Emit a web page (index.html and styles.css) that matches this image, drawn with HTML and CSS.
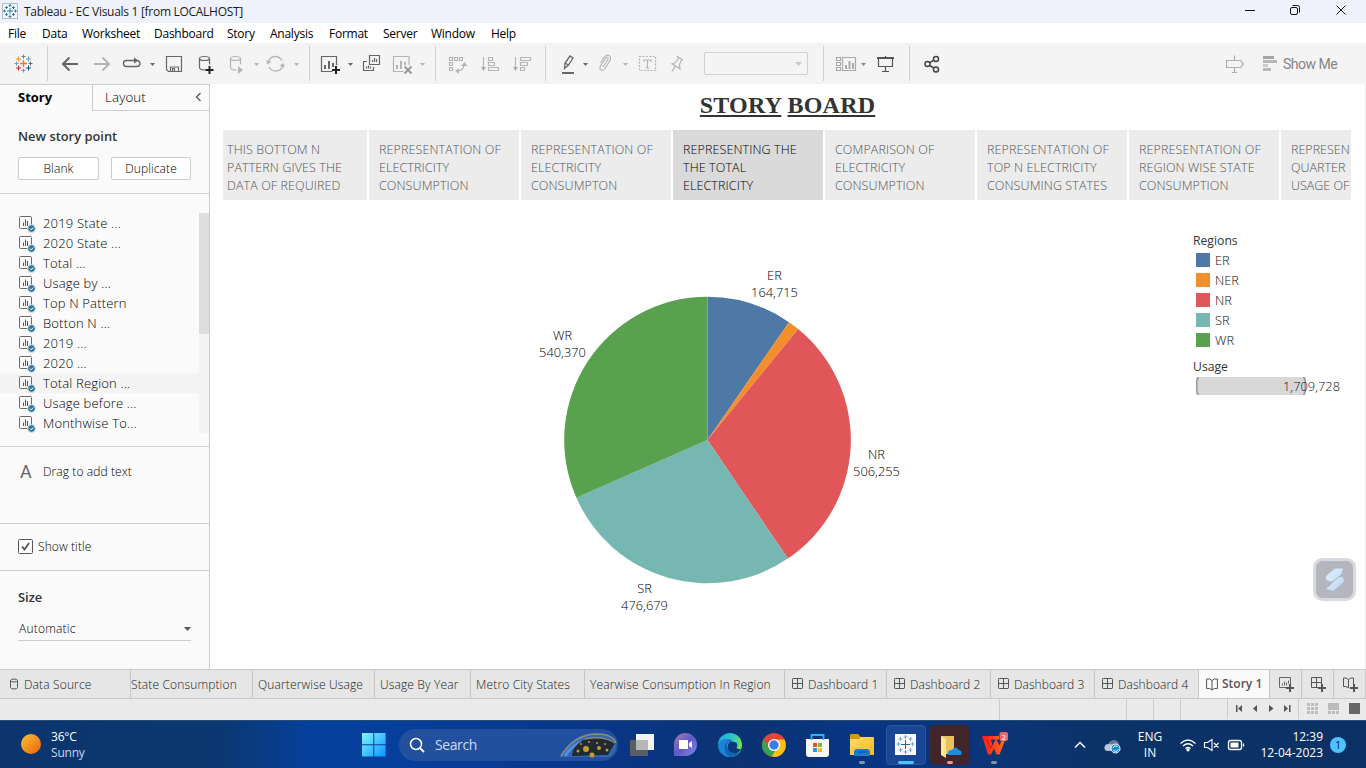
FILE: index.html
```html
<!DOCTYPE html>
<html lang="en">
<head>
<meta charset="utf-8">
<title>Tableau - EC Visuals 1</title>
<link rel="stylesheet" href="styles.css">
</head>
<body>
<svg width="0" height="0" class="defs">
  <defs>
    <linearGradient id="sun" x1="0" y1="0" x2="1" y2="1"><stop offset="0" stop-color="#f6c234"/><stop offset="1" stop-color="#f0600a"/></linearGradient>
    <linearGradient id="win" x1="0" y1="0" x2="1" y2="1"><stop offset="0" stop-color="#84f4ff"/><stop offset="1" stop-color="#0595ff"/></linearGradient>
    <linearGradient id="edge" x1="0" y1="0" x2="1" y2="0.4"><stop offset="0" stop-color="#1fa8e8"/><stop offset=".6" stop-color="#31c5c8"/><stop offset="1" stop-color="#6fe44e"/></linearGradient>
    <linearGradient id="folder" x1="0" y1="0" x2="1" y2="1"><stop offset="0" stop-color="#ffdc70"/><stop offset="1" stop-color="#fbba18"/></linearGradient>
    <linearGradient id="chat" x1="0" y1="0" x2="1" y2="1"><stop offset="0" stop-color="#b07ab0"/><stop offset=".5" stop-color="#5c58c9"/><stop offset="1" stop-color="#8c88f0"/></linearGradient>
    <linearGradient id="wing" x1="0" y1="0" x2="1" y2="1"><stop offset="0" stop-color="#e0effc"/><stop offset="1" stop-color="#b8daf8"/></linearGradient>
    <linearGradient id="wps" gradientUnits="userSpaceOnUse" x1="983" y1="0" x2="1004" y2="0"><stop offset="0" stop-color="#ff1c1c"/><stop offset="1" stop-color="#ff6a1c"/></linearGradient>
    <symbol id="sheet" viewBox="0 0 17 17">
      <rect x=".5" y=".5" width="12" height="12" rx="1" fill="none" stroke="#6a6a6a"/>
      <path d="M4.500 10V6.500M6.500 10V3.500M8.500 10V5" stroke="#555" fill="none"/>
      <circle cx="12.500" cy="12.500" r="3.900" fill="#337a9e" stroke="#fafafa" stroke-width=".8"/>
      <path d="M10.800 12.500l1.300 1.300 2.200-2.300" stroke="#fff" fill="none"/>
    </symbol>
    <symbol id="grid" viewBox="0 0 12 12"><rect x=".5" y=".5" width="10" height="10" rx=".7" fill="none" stroke="#555"/><path d="M5.500 .5v10M.5 5.500h10" stroke="#555"/></symbol>
    <symbol id="book" viewBox="0 0 12 13"><path d="M6 2.600L3.800 1H.6v9.500h3L6 12l2.400-1.500h3V1H8.200L6 2.600V12" fill="none" stroke="#555"/></symbol>
  </defs>
</svg>

<header class="titlebar">
  <svg class="app-icon" width="17" height="17" viewBox="0 0 17 17"><rect x=".5" y=".5" width="15" height="15" fill="#f2f6fb" stroke="#b5bcc4"/><path d="M8 5v6M5 8h6M8 1v3M6.600 2.500h2.800M8 12v3M6.600 13.500h2.800M1 8h3M2.500 6.600v2.800M12 8h3M13.500 6.600v2.800M4.500 3v3M3 4.500h3M11.500 3v3M10 4.500h3M4.500 10v3M3 11.500h3M11.500 10v3M10 11.500h3" stroke="#3381b0" stroke-width="1"/></svg>
  <span class="app-title">Tableau - EC Visuals 1 [from LOCALHOST]</span>
  <svg class="win-controls" width="136" height="23" viewBox="1230 0 136 23" fill="none" stroke="#111" stroke-width="1"><path d="M1245 10.500h10"/><rect x="1290.500" y="7.500" width="7" height="7" rx="1.500"/><path d="M1292.500 5.500h5q2 0 2 2v5"/><path d="M1336.500 5.500l9 9M1345.500 5.500l-9 9"/></svg>
</header>

<nav class="menu">
  <span class="m1">File</span><span class="m2">Data</span><span class="m3">Worksheet</span><span class="m4">Dashboard</span><span class="m5">Story</span><span class="m6">Analysis</span><span class="m7">Format</span><span class="m8">Server</span><span class="m9">Window</span><span>Help</span>
</nav>

<div class="toolbar">
  <svg width="47" height="41" viewBox="0 43 47 41" fill="none">
    <path d="M23.500 60v7M20 63.500h7" stroke="#e8762d" stroke-width="1.300"/>
    <path d="M18.500 56.500v5M16 59h5" stroke="#eb912b"/><path d="M28.500 56.500v5M26 59h5" stroke="#7099a6"/>
    <path d="M18.500 65.500v5M16 68h5" stroke="#c72037"/><path d="M28.500 65.500v5M26 68h5" stroke="#1f447e"/>
    <path d="M23.500 54.500v4M21.500 56.500h4" stroke="#59879b"/><path d="M23.500 68.500v4M21.500 70.500h4" stroke="#7099a6"/>
    <path d="M16.500 61.500v4M14.500 63.500h4" stroke="#7099a6"/><path d="M30.500 61.500v4M28.500 63.500h4" stroke="#5b6591"/>
  </svg>
  <i class="sep"></i>
  <svg width="261" height="41" viewBox="48 43 261 41" fill="none" stroke="#666">
    <path d="M78 64H63.500M69.500 57.500L63 64l6.500 6.500" stroke-width="2"/>
    <path d="M94 64h14.500M102.500 57.500L109 64l-6.500 6.500" stroke="#b5b5b5" stroke-width="2"/>
    <path d="M134 60.500h-7.500q-3 0-3 3t3 3h10.500q3 0 3-3q0-2-2-3" stroke-width="1.400"/><path d="M134 57.500v6l4.500-3z" fill="#666" stroke="none"/>
    <path d="M150 63h5l-2.500 3z" fill="#666" stroke="none"/>
    <path d="M166.500 56.500h15v15h-13l-2-2zM170.500 71.500v-4.500h8v4.500M172.500 71v-2.500h2v2.500" stroke-width="1.200"/>
    <g stroke-width="1.200"><ellipse cx="204.500" cy="58.500" rx="5" ry="2"/><path d="M199.500 58.500v9q0 2.500 6 2.500M209.500 58.500v6"/></g><path d="M209.500 66v8M205.500 70h8" stroke="#222" stroke-width="2"/>
    <g stroke="#b5b5b5" stroke-width="1.200"><ellipse cx="235.500" cy="58.500" rx="5" ry="2"/><path d="M230.500 58.500v9q0 2.500 6 2.500M240.500 58.500v6"/></g><path d="M238 66v8l5-4z" fill="#b5b5b5" stroke="none"/>
    <path d="M254 63h5l-2.500 3zM294 63h5l-2.500 3z" fill="#b5b5b5" stroke="none"/>
    <path d="M268.500 62q1.500-5.500 7-5.500q4 0 6.500 4M283 65.500q-1.500 5.500-7.500 5.500q-4 0-6.500-4" stroke="#b5b5b5" stroke-width="1.300"/><path d="M266.500 60l5 2-4.500 2.500zM284.500 67.500l-5-2 4.500-2.500z" fill="#b5b5b5" stroke="none"/>
  </svg>
  <i class="sep"></i>
  <svg width="125" height="41" viewBox="310 43 125 41" fill="none" stroke="#666">
    <path d="M336.500 65v-8.500h-15v15h11" stroke-width="1.200"/><path d="M325 69v-4M329 69v-8M333 67v-4" stroke-width="2"/><path d="M336 66v8M332 70h8" stroke="#222" stroke-width="2"/><path d="M348 63h5l-2.500 3z" fill="#666" stroke="none"/>
    <path d="M369.500 55.500h10v9h-10zM367 61.500h-3.500v9h10v-3.500M372.500 62v-2M374.500 62v-4M376.500 62v-3M366.500 68.500v-2M368.500 68.500v-3M370.500 68.500v-2" stroke-width="1.200"/>
    <g stroke="#b5b5b5"><path d="M409 65v-8.500h-15.500v15h10" stroke-width="1.200"/><path d="M397 69v-4M401 69v-8M405 65v-3" stroke-width="2"/><path d="M404.500 66.500l7 7M411.500 66.500l-7 7" stroke="#999" stroke-width="2"/></g><path d="M420 63h5l-2.500 3z" fill="#b5b5b5" stroke="none"/>
  </svg>
  <i class="sep"></i>
  <svg width="109" height="41" viewBox="436 43 109 41" fill="none" stroke="#b5b5b5" stroke-width="1.200">
    <path d="M449.500 57.500h3v3h-3zM454.500 57.500h3v3h-3zM459.500 57.500h3v3h-3zM449.500 62.500h3v3h-3zM449.500 67.500h3v3h-3zM464 64q0 7-7 7"/><path d="M461 66l3.500-4 3 4zM459 68v6l-4-3z" fill="#b5b5b5" stroke="none"/>
    <path d="M483.500 57v12M488.500 57.500h4v3h-4zM488.500 62.500h6v3h-6zM488.500 67.500h10v3h-10z"/><path d="M481 67h5l-2.500 4z" fill="#aaa" stroke="none"/>
    <path d="M515.500 57v12M520.500 57.500h10v3h-10zM520.500 62.500h7v3h-7zM520.500 67.500h4v3h-4z"/><path d="M513 67h5l-2.500 4z" fill="#aaa" stroke="none"/>
  </svg>
  <i class="sep"></i>
  <svg width="158" height="41" viewBox="546 43 158 41" fill="none" stroke="#666" stroke-width="1.200">
    <path d="M564.500 68.500l.5-5.500 5-7 3 2-4.500 7zM565 63l3.500 2" stroke-width="1.300"/><path d="M562 73h12" stroke-width="2"/><path d="M583 63h5l-2.500 3z" fill="#666" stroke="none"/>
    <g stroke="#b5b5b5"><path d="M603 67l4.500-7q1.200-2 0-2.500t-2.500 1.500l-4.500 7q-1.500 3 .5 4t4-1.500l5-8q1.500-4-1-5t-4.500 1.500l-4 6"/><path d="M623 63h5l-2.500 3z" fill="#b5b5b5" stroke="none"/><rect x="639.500" y="56.500" width="16" height="14" stroke-dasharray="2 1.300"/><path d="M644 62v-2h7v2M647.500 60v8M645.500 68h4"/><path d="M677.500 56.500l5 3.500-1.500.8-1.500 4 .5 4-8-5 3-1 3-3.500zM675 66.500l-3 5"/></g>
  </svg>
  <div class="combo"><svg width="7" height="4" viewBox="0 0 7 4"><path d="M0 0h7L3.500 4z" fill="#c8c8c8"/></svg></div>
  <i class="sep sep-gap"></i>
  <svg width="85" height="41" viewBox="824 43 85 41" fill="none" stroke="#aaa" stroke-width="1.200">
    <path d="M836.500 57.500h4v3h-4zM836.500 62.500h4v3h-4zM836.500 67.500h4v3h-4zM842.500 57.500h13v13h-13z"/><path d="M846 69v-4M849.500 69v-8M853 69v-6" stroke-width="2"/><path d="M861 63h5l-2.500 3z" fill="#888" stroke="none"/>
    <g stroke="#555"><path d="M877 58h17" stroke-width="2"/><path d="M878.500 58v8.500h14V58M885.500 56v2M885.500 67v4.500M882 71.500h7"/></g>
  </svg>
  <i class="sep"></i>
  <svg width="45" height="41" viewBox="910 43 45 41" fill="none" stroke="#444" stroke-width="1.500"><circle cx="927.500" cy="64" r="2.500"/><circle cx="936" cy="59" r="2.500"/><circle cx="936" cy="69.500" r="2.500"/><path d="M929.500 62.800l4.300-2.600M929.500 65.300l4.300 2.700"/></svg>
  <svg class="push" width="60" height="41" viewBox="1223 43 60 41" fill="none" stroke="#b0b0b0" stroke-width="1.200"><path d="M1226.500 60.500h14l3 3.500-3 3.500h-14zM1234.500 55.500v5M1234.500 67.500v5M1232 72.500h5"/><path d="M1263 57.500h11" stroke="#a5a5a5" stroke-width="3"/><path d="M1263 61.500h14M1263 69.500h8" stroke="#b8b8b8" stroke-width="3"/><path d="M1263 65.500h5" stroke="#ccc" stroke-width="3"/></svg>
  <span class="showme">Show Me</span>
</div>

<main class="work">
  <aside class="side">
    <div class="side-tabs"><b>Story</b><div class="layout-tab"><span>Layout</span><svg width="7" height="10" viewBox="0 0 7 10"><path d="M5.500 1L1.500 5l4 4" fill="none" stroke="#555" stroke-width="1.300"/></svg></div></div>
    <section class="new-point"><h3>New story point</h3><div class="buttons"><span>Blank</span><span>Duplicate</span></div></section>
    <section class="sheets">
      <ul>
        <li><svg><use href="#sheet"/></svg>2019 State ...</li>
        <li><svg><use href="#sheet"/></svg>2020 State ...</li>
        <li><svg><use href="#sheet"/></svg>Total ...</li>
        <li><svg><use href="#sheet"/></svg>Usage by ...</li>
        <li><svg><use href="#sheet"/></svg>Top N Pattern</li>
        <li><svg><use href="#sheet"/></svg>Botton N ...</li>
        <li><svg><use href="#sheet"/></svg>2019 ...</li>
        <li><svg><use href="#sheet"/></svg>2020 ...</li>
        <li class="hover"><svg><use href="#sheet"/></svg>Total Region ...</li>
        <li><svg><use href="#sheet"/></svg>Usage before ...</li>
        <li><svg><use href="#sheet"/></svg>Monthwise To...</li>
      </ul>
      <div class="scroll"><div class="thumb"></div></div>
    </section>
    <section class="drag"><span class="big-a">A</span>Drag to add text</section>
    <section class="show-title"><svg width="15" height="15" viewBox="0 0 15 15"><rect x=".5" y=".5" width="14" height="14" rx="1" fill="#fff" stroke="#555"/><path d="M4 7.500l2.500 3L11 4" fill="none" stroke="#555" stroke-width="1.800"/></svg>Show title</section>
    <section class="size"><h3>Size</h3><div class="select">Automatic<svg width="7" height="4" viewBox="0 0 7 4"><path d="M0 0h7L3.500 4z" fill="#555"/></svg></div></section>
  </aside>

  <section class="story">
    <h1><u>STORY</u> <u>BOARD</u></h1>
    <div class="points">
      <div class="first">THIS BOTTOM N<br>PATTERN GIVES THE<br>DATA OF REQUIRED</div>
      <div>REPRESENTATION OF<br>ELECTRICITY<br>CONSUMPTION</div>
      <div>REPRESENTATION OF<br>ELECTRICITY<br>CONSUMPTON</div>
      <div class="active">REPRESENTING THE<br>THE TOTAL<br>ELECTRICITY</div>
      <div>COMPARISON OF<br>ELECTRICITY<br>CONSUMPTION</div>
      <div>REPRESENTATION OF<br>TOP N ELECTRICITY<br>CONSUMING STATES</div>
      <div>REPRESENTATION OF<br>REGION WISE STATE<br>CONSUMPTION</div>
      <div class="last">REPRESEN<br>QUARTER<br>USAGE OF</div>
    </div>
    <div class="viz">
      <svg class="pie" width="970" height="469" viewBox="210 200 970 469">
        <path d="M707.500 440V296.700A143.300 143.300 0 0 1 789 322.200z" fill="#4e79a7"/>
        <path d="M707.500 440L789 322.200A143.300 143.300 0 0 1 798.200 329z" fill="#f28e2b"/>
        <path d="M707.500 440L798.200 329A143.300 143.300 0 0 1 787.900 558.600z" fill="#e15759"/>
        <path d="M707.500 440L787.900 558.600A143.300 143.300 0 0 1 576.400 497.800z" fill="#76b7b2"/>
        <path d="M707.500 440L576.400 497.800A143.300 143.300 0 0 1 707.500 296.700z" fill="#59a14f"/>
        <g class="labels">
          <text x="774.500" y="280">ER</text><text x="774.500" y="297">164,715</text>
          <text x="562.500" y="340">WR</text><text x="562.500" y="357">540,370</text>
          <text x="876.500" y="459">NR</text><text x="876.500" y="476">506,255</text>
          <text x="644.500" y="593">SR</text><text x="644.500" y="610">476,679</text>
        </g>
      </svg>
      <div class="legend">
        <h4>Regions</h4>
        <div><i class="er"></i>ER</div><div><i class="ner"></i>NER</div><div><i class="nr"></i>NR</div><div><i class="sr"></i>SR</div><div><i class="wr"></i>WR</div>
        <h4 class="usage">Usage</h4>
        <div class="range"><svg width="110" height="18" viewBox="0 0 110 18"><rect width="110" height="18" fill="#d7d7d7"/><path d="M2.500 0L.8 3.500v11L2.500 18M107.500 0l1.700 3.500v11l-1.700 3.500" fill="none" stroke="#999" stroke-width="1.500"/></svg><span>1,709,728</span></div>
      </div>
    </div>
    <svg class="float" width="43" height="43" viewBox="0 0 43 43"><rect x="1.500" y="1.500" width="40" height="40" rx="8" fill="#b5b6bd" stroke="#d9dae0" stroke-width="3"/><path d="M22 10.500h8l-2 6-8 6.500q-4 1.500-7-2v-3zM29 19q2.500 1 1.500 5l-9 8q-2 1.500-4.500 0l-4-1 12-11q2-1.500 4-1z" fill="url(#wing)"/></svg>
  </section>
</main>

<div class="sheet-tabs">
  <div class="t-source"><svg width="10" height="12" viewBox="0 0 10 12"><path d="M1.500 2.500v7q0 1.500 3.500 1.500t3.500-1.500v-7M1.500 2.500Q1.500 1 5 1t3.500 1.500T5 4 1.500 2.500" fill="none" stroke="#555"/></svg>Data Source</div>
  <div class="t-state">State Consumption</div>
  <div class="t-quarter">Quarterwise Usage</div>
  <div class="t-year">Usage By Year</div>
  <div class="t-metro">Metro City States</div>
  <div class="t-region">Yearwise Consumption In Region</div>
  <div class="t-dash t-dash1"><svg width="12" height="12"><use href="#grid"/></svg>Dashboard 1</div>
  <div class="t-dash"><svg width="12" height="12"><use href="#grid"/></svg>Dashboard 2</div>
  <div class="t-dash"><svg width="12" height="12"><use href="#grid"/></svg>Dashboard 3</div>
  <div class="t-dash"><svg width="12" height="12"><use href="#grid"/></svg>Dashboard 4</div>
  <div class="t-story"><svg width="12" height="13"><use href="#book"/></svg>Story 1</div>
  <div class="t-new"><svg width="16" height="16" viewBox="0 0 16 16"><path d="M11.500 7V.5H.5v10h7M3.500 8.500v-2M5.500 8.500v-4M7.500 8.500v-3M9.500 6.500v-3" fill="none" stroke="#666"/><path d="M11 7v8M7 11h8" stroke="#555" stroke-width="2"/></svg></div>
  <div class="t-new"><svg width="16" height="16" viewBox="0 0 16 16"><path d="M10.500 7V.5H.5v10h7M5.500 .5v10M.5 5.500h10" fill="none" stroke="#555"/><path d="M11 7v8M7 11h8" stroke="#555" stroke-width="2"/></svg></div>
  <div class="t-new"><svg width="16" height="16" viewBox="0 0 16 16"><path d="M10.500 7V1H8L5.500 2.500 3 1H.5v8.500H3l2.500 1.500V2.500" fill="none" stroke="#555"/><path d="M11 7v8M7 11h8" stroke="#555" stroke-width="2"/></svg></div>
</div>
<div class="status">
  <i class="s1"></i><i class="s2"></i><i class="s3"></i><i class="s4"></i>
  <svg class="pager" width="72" height="20" viewBox="1228 700 70 20" fill="#555"><path d="M1236 706h1.500v7h-1.500zM1242 706v7l-4-3.500zM1257 706v7l-4-3.500zM1269 706v7l4.500-3.500zM1284 706v7l4-3.500zM1289 706h1.500v7h-1.500z"/></svg>
  <svg width="67" height="20" viewBox="1299 700 67 20" fill="#bcbcbc"><path d="M1307 704h3v3h-3zM1311 704h3v3h-3zM1315 704h3v3h-3zM1307 708h3v3h-3zM1311 708h3v3h-3zM1315 708h3v3h-3zM1307 712h3v3h-3zM1311 712h3v3h-3zM1315 712h3v3h-3zM1328 704h11v7h-11zM1328 712h3v3h-3zM1332 712h3v3h-3zM1336 712h3v3h-3z"/><path d="M1349 704h11v11h-11z" fill="#666"/></svg>
</div>

<footer class="taskbar">
  <svg width="50" height="48" viewBox="0 720 50 48"><circle cx="31" cy="743" r="10" fill="url(#sun)"/></svg>
  <div class="weather"><span>36°C</span><span class="dim">Sunny</span></div>
  <svg class="start" width="24" height="24" viewBox="0 0 24 24"><path d="M0 0h11.300v11.300H0zM12.300 0h11.300v11.300H12.300zM0 12.300h11.300v11.300H0zM12.300 12.300h11.300v11.300H12.300z" fill="url(#win)"/></svg>
  <div class="search">
    <svg width="16" height="16" viewBox="0 0 16 16" fill="none" stroke="#fff"><circle cx="7" cy="7" r="5.500" stroke-width="1.500"/><path d="M11 11l4 4" stroke-width="1.800"/></svg>
    <span>Search</span>
    <svg class="bloom" width="58" height="26" viewBox="560 734 58 26"><path d="M561 758q13-23 36-23q20 0 20 14-1 9-9 10H562z" fill="#3468b3"/><path d="M562 758q13-21 35-22 17 0 20 9" fill="none" stroke="#8d8a80" stroke-width="1.500"/><path d="M566 758q9-15 28-17" fill="none" stroke="#4f8fdc" stroke-width="3"/><path d="M573 758q0-9 11-16 18-4 32 3l-7 12z" fill="#222b32"/><path d="M586 741q18-4 30 4" fill="none" stroke="#b18b45"/><g fill="#c69b30"><circle cx="587" cy="751" r="3"/><circle cx="600" cy="750" r="2"/><circle cx="593" cy="757" r="2.500"/><circle cx="606" cy="746" r="1"/><circle cx="579" cy="753" r="1.500"/><circle cx="598" cy="745" r="1"/><circle cx="608" cy="752" r="1.500"/><circle cx="582" cy="746" r="1"/><circle cx="590" cy="744" r="1"/></g></svg>
  </div>
  <svg class="apps" width="398" height="48" viewBox="618 720 398 48">
    <path d="M630 739h18v16h-18z" fill="#5b5e64"/><path d="M636 733h18v16h-18z" fill="#f3f3f3"/><path d="M636 739h12v10h-12z" fill="#b4b6ba"/>
    <path d="M674 755v-11a11.500 11.500 0 1 1 11.500 11z" fill="url(#chat)"/><path d="M679 739h9v9h-9zM689 742l3-2v7l-3-2z" fill="#fff"/>
    <circle cx="730" cy="744" r="12" fill="url(#edge)"/><path d="M718 744q2-6 9-6 4 0 6 3-5-1-6 3 0 7 8 8 3 0 6-1-4 5-11 5-10-1-12-12z" fill="#1264b4"/><path d="M718.500 743q2-5 8-5 3 0 5 1.500-7 1-7 7 0 6 5 9.500-10-1-11-13z" fill="#1a84d8"/><path d="M731 741q4-1 6 1.500 1 2-.5 4.500 3 2 5 1-3 5-8 4-6-1-6-7 1-4 3.500-4z" fill="#0b387c"/>
    <circle cx="774" cy="744" r="12" fill="#e94335"/><path d="M774 744l-5 9q2 3 5 3a12 12 0 0 0 10.500-17.500H774z" fill="#fbc116"/><path d="M763.600 738l5.500 9 6 3-3.500 5.800Q762 753 762 744q0-3 1.600-6z" fill="#34a353"/><circle cx="774" cy="744" r="6" fill="#fff"/><circle cx="774" cy="744" r="4.700" fill="#3b7ded"/>
    <path d="M806 738h23v15q0 3-3 3h-17q-3 0-3-3z" fill="#f7f7f7"/><path d="M811.500 739v-5h12v5" fill="none" stroke="#27b5f0" stroke-width="1.800"/><path d="M813 742h4v4h-4z" fill="#f04e23"/><path d="M818 742h4v4h-4z" fill="#7cb92c"/><path d="M813 747h4v4h-4z" fill="#16a2ea"/><path d="M818 747h4v4h-4z" fill="#fcb912"/>
    <path d="M850 734q0-1 1-1h7l3 3v5h-11z" fill="#d39a0c"/><path d="M850 738h9l2-2h12q1 0 1 1v17h-24z" fill="url(#folder)"/><path d="M854 755v-4q0-3 3-3h10q3 0 3 3v4z" fill="#1b7bd0"/><path d="M858 751h9" stroke="#0a579f" stroke-width="1.500"/>
    <rect x="886.500" y="724.500" width="39" height="39" rx="4" fill="#194796" stroke="#2d57a0"/><path d="M895 733h21v21h-21z" fill="#fafafa"/><path d="M905.500 739v9M901 743.500h9" stroke="#35658e"/><path d="M905.500 734v4M903.500 736h4M905.500 749v4M903.500 751h4M898.500 741v4M896.500 743h4M912.500 741v4M910.500 743h4M900.500 736v4M898.500 738h4M910.500 736v4M908.500 738h4M900.500 747v4M898.500 749h4M910.500 747v4M908.500 749h4" stroke="#7aa5c2"/>
    <rect x="930" y="724" width="40" height="40" rx="5" fill="#412529"/><path d="M941 735h13v18h-13z" fill="#ecc15c"/><path d="M941 735l5 3v19l-5-3z" fill="#ffe598"/><path d="M948 754q-1-5 4-5 3-5 7 0 4 1 2 5z" fill="#198de0"/>
    <path d="M982 735h17v3.500h-8l1.500 6 3.500-7 3.500 7 2-5h3.500l-5.500 14h-3l-2.500-6-3 6H988z" fill="url(#wps)"/><path d="M987 738.500l3.500 9 2-4" fill="none" stroke="#a3121c" stroke-width=".8"/><rect x="999.500" y="731" width="8.500" height="9" rx="2" fill="#e86b6b"/><text class="badge" x="1001.500" y="738.500">2</text>
    <g stroke-width="3" stroke-linecap="round"><path d="M860.500 761.500h3M992.500 761.500h3" stroke="#8291af"/><path d="M899.500 761.500h13" stroke="#4cc2ff"/><path d="M948.500 761.500h3" stroke="#ff8c97"/></g>
  </svg>
  <svg class="tray" width="64" height="48" viewBox="1066 720 64 48"><path d="M1075 746.500l5-5 5 5" fill="none" stroke="#fff" stroke-width="1.500"/><path d="M1107 750q-3-1-2.500-4t4-3q2-4 6-3.500t4 5l2 5z" fill="#bcc7d6"/><path d="M1109 743q2-4 6-3.500t4 5z" fill="#68788f"/><circle cx="1115.500" cy="747.500" r="4.500" fill="#1687dc" stroke="#fff"/><path d="M1113 747q1-3 4.500-1.500M1118 748.500q-1 3-4.500 1" fill="none" stroke="#fff"/></svg>
  <div class="lang"><span>ENG</span><span>IN</span></div>
  <svg class="net" width="66" height="48" viewBox="1179 720 66 48" fill="none" stroke="#fff" stroke-width="1.300"><path d="M1180.500 742.500q7.500-7 15 0M1183 745q5-4.500 10 0M1185.500 747.500q2.500-2 5 0"/><circle cx="1188" cy="748.800" r="1" fill="#fff"/><path d="M1204.500 741.500h3l4.500-3v11l-4.500-3h-3zM1214 742l4.500 4.500M1218.500 742l-4.500 4.500" stroke-width="1.100"/><rect x="1228.500" y="739.500" width="13" height="9" rx="2"/><path d="M1230.500 741.500h8v5h-8z" fill="#fff" stroke="none"/><path d="M1243.500 742.500v3"/></svg>
  <div class="clock"><span>12:39</span><span>12-04-2023</span></div>
  <div class="count">1</div>
</footer>
</body>
</html>
```
FILE: styles.css
```css
* { box-sizing: border-box; }
body { margin: 0; width: 1366px; height: 768px; overflow: hidden; display: flex; flex-direction: column; background: #fff; font: 12px/16px "Open Sans", "Noto Sans", sans-serif; color: #333; white-space: nowrap; }
svg { display: block; flex: none; }
.defs { position: absolute; }
h1, h3, h4, ul { margin: 0; padding: 0; list-style: none; }

.titlebar { flex: none; height: 23px; background: #eff2fa; display: flex; align-items: center; padding-left: 2px; color: #1b1b1b; }
.app-title { margin-left: 5px; letter-spacing: -.29px; }
.win-controls { margin-left: auto; }

.menu { flex: none; height: 20px; display: flex; align-items: center; padding: 1px 0 0 8px; color: #000; letter-spacing: -.25px; }
.m1 { width: 34px; } .m2 { width: 40px; } .m3 { width: 72px; } .m4 { width: 73px; } .m5 { width: 43px; } .m6 { width: 59px; } .m7 { width: 54px; } .m8 { width: 48px; } .m9 { width: 60px; }

.toolbar { flex: none; height: 41px; background: #f4f4f4; display: flex; align-items: center; }
.sep { flex: none; width: 1px; height: 35px; background: #d0d0d0; }
.sep-gap { margin-left: 15px; }
.combo { width: 104px; height: 23px; border: 1px solid #d0d0d0; border-radius: 2px; display: flex; align-items: center; justify-content: flex-end; padding-right: 5px; }
.push { margin-left: auto; }
.showme { width: 83px; font: 14px/20px Roboto, sans-serif; letter-spacing: -.5px; color: #848484; }

.work { flex: none; height: 585px; display: flex; }
.side { width: 210px; height: 585px; background: #fafafa; border-right: 1px solid #ccc; border-top: 1px solid #ccc; display: flex; flex-direction: column; color: #000; font-weight: 300; letter-spacing: .1px; }
.side-tabs { height: 26px; display: flex; line-height: 25px; color: #000; }
.side-tabs b { width: 92px; padding-left: 18px; font-size: 13px; font-weight: 700; letter-spacing: 0; color: #000; }
.layout-tab { flex: 1; display: flex; align-items: center; justify-content: space-between; border-left: 1px solid #ccc; border-bottom: 1px solid #ccc; padding: 0 7px 1px 12px; font-size: 13.4px; }
.side h3 { font-size: 12.9px; font-weight: 600; letter-spacing: 0; color: #333; line-height: 18px; }
.side section { border-bottom: 1px solid #ccc; flex: none; }
.new-point { height: 83px; padding: 16px 18px 0; }
.buttons { display: flex; justify-content: space-between; margin-top: 12px; }
.buttons span { width: 81px; height: 23px; line-height: 21px; text-align: center; background: #fff; border: 1px solid #ccc; border-radius: 2px; }
.buttons span + span { width: 80px; }
.sheets { height: 253px; padding-top: 19px; display: flex; align-items: flex-start; }
.sheets ul { width: 199px; font-size: 13px; line-height: 20px; letter-spacing: .17px; }
.sheets li { height: 20px; display: flex; align-items: center; padding-left: 19px; gap: 7px; }
.sheets li svg { width: 17px; height: 17px; margin-top: 3px; }
.hover { background: #f4f4f4; }
.scroll { width: 10px; height: 220px; background: #f4f4f4; }
.thumb { height: 121px; background: #dedede; }
.drag { height: 77px; padding: 15px 0 0 20px; display: flex; line-height: 20px; }
.big-a { width: 23px; font: 18px/20px Roboto, sans-serif; color: #666; }
.show-title { height: 47px; display: flex; align-items: center; gap: 5px; padding-left: 18px; }
.show-title svg { margin-top: -1px; }
.side .size { border-bottom: 0; padding: 17px 18px 0; }
.select { margin-top: 12px; height: 23px; line-height: 22px; border-bottom: 1px solid #ccc; display: flex; align-items: center; justify-content: space-between; padding-left: 1px; letter-spacing: .2px; }

.story { position: relative; flex: 1; min-width: 0; display: flex; flex-direction: column; border-right: 1px solid #eee; }
.story h1 { height: 46px; line-height: 42px; text-align: center; font-family: "Liberation Serif", serif; font-size: 24px; letter-spacing: .2px; color: #333; }
.story u { text-decoration-thickness: 2px; text-underline-offset: 2px; }
.points { display: flex; gap: 2px; width: 1128px; margin-left: 13px; font-size: 12.5px; font-weight: 300; letter-spacing: .1px; line-height: 18px; color: #555; }
.points div { flex: none; width: 150px; height: 70px; background: #ececec; padding: 11px 0 0 10px; }
.points .first { width: 144px; padding-left: 4px; }
.points .last { width: 70px; letter-spacing: 0; }
.points .active { background: #dadada; color: #000; }
.viz { display: flex; flex: 1; }
.labels { font-size: 12.8px; fill: #000; text-anchor: middle; font-weight: 300; letter-spacing: .05px; }
.legend { padding: 31px 0 0 13px; font-size: 12.8px; font-weight: 300; line-height: 20px; color: #111; }
.legend h4 { font-weight: 400; color: #333; font-size: 12.2px; line-height: 20px; height: 20px; }
.legend > div { display: flex; align-items: center; height: 18px; margin-bottom: 2px; gap: 5px; padding-left: 3px; }
.legend i { width: 14px; height: 14px; }
.legend .usage { margin-top: 8px; }
.er { background: #4e79a7; } .ner { background: #f28e2b; } .nr { background: #e15759; } .sr { background: #76b7b2; } .wr { background: #59a14f; }
.range span { margin-left: -28px; color: #111; letter-spacing: .05px; }
.float { position: absolute; right: 9px; bottom: 68px; }

.sheet-tabs { flex: none; height: 30px; display: flex; background: #e6e6e6; border-top: 1px solid #c8c8c8; border-bottom: 1px solid #c8c8c8; color: #222; font-weight: 300; letter-spacing: .14px; }
.sheet-tabs > div { flex: none; display: flex; align-items: center; border-right: 1px solid #c8c8c8; padding: 2px 0 0 5px; }
.sheet-tabs svg { margin-top: -3px; }
.sheet-tabs .t-source { width: 131px; padding-left: 9px; gap: 5px; }
.sheet-tabs .t-state { width: 122px; padding-left: 0; }
.t-quarter { width: 122px; } .t-year { width: 96px; } .t-metro { width: 114px; } .t-region { width: 200px; }
.sheet-tabs .t-dash { width: 104px; padding-left: 7px; gap: 4px; letter-spacing: .05px; }
.sheet-tabs .t-dash1 { width: 102px; }
.sheet-tabs .t-story { width: 71px; padding: 0 0 0 7px; gap: 4px; background: #fafafa; font-weight: 600; letter-spacing: 0; color: #555; }
.sheet-tabs .t-story svg { margin-top: 0; }
.sheet-tabs .t-new { width: 32px; padding: 5px 0 0 9px; }

.status { flex: none; height: 21px; background: #eaeaea; display: flex; }
.status i { border-right: 1px solid #ccc; }
.s1 { width: 1000px; } .s2 { width: 127px; } .s3 { width: 27px; } .s4 { width: 27px; }
.pager { border-left: 1px solid #ccc; border-right: 1px solid #ccc; margin-left: 46px; }

.taskbar { flex: none; height: 48px; display: flex; align-items: center; color: #fff; font-size: 12px; border-top: 1px solid #294b77; background: linear-gradient(90deg, #0b356c 0, #0b3870 220px, #06409d 310px, #063e9b 400px, #093688 600px, #0b3271 740px, #083584 850px, #0b3579 980px, #0b3368 1100px, #0b3065 1366px); }
.weather, .lang, .clock { display: flex; flex-direction: column; line-height: 16px; }
.weather { width: 312px; letter-spacing: -.2px; padding-left: 1px; }
.dim { color: #c9d6e7; }
.search { width: 219px; height: 32px; margin-left: 13px; margin-right: -1px; border-radius: 16px; background: #234f9f; display: flex; align-items: center; padding-left: 10px; color: #cedbef; font-size: 14px; letter-spacing: -.4px; }
.search span { width: 124px; margin-left: 10px; }
.apps { margin-left: 1px; }
.tray { margin-left: 50px; }
.lang { width: 40px; text-align: center; }
.net { margin-left: 9px; }
.clock { width: 78px; text-align: right; }
.count { width: 16px; height: 16px; margin-left: 7px; border-radius: 8px; background: #4cc2ff; color: #123; text-align: center; font-size: 10px; line-height: 16px; }
.badge { font-size: 8px; fill: #fff; }
```
